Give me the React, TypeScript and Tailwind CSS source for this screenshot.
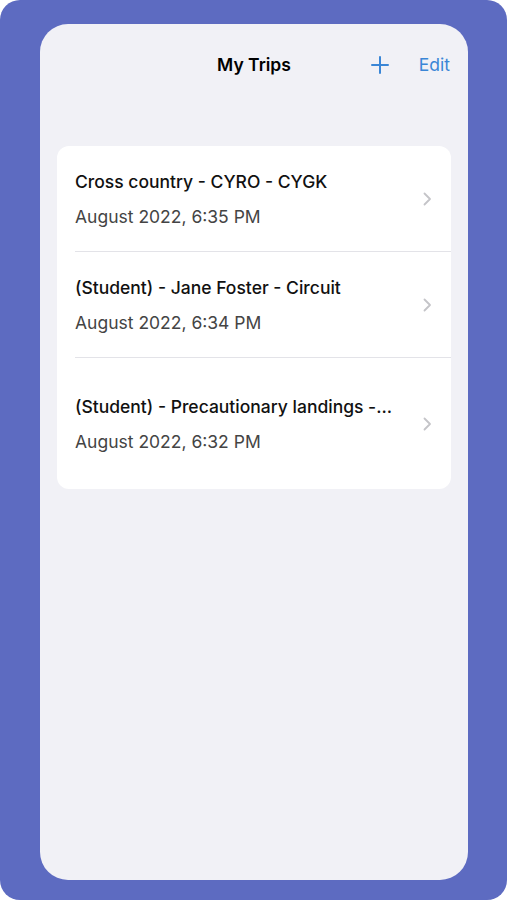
import React from "react";

function Chevron() {
  return (
    <svg width="9" height="14" viewBox="0 0 9 14" fill="none" className="shrink-0">
      <path d="M1.5 1.5L7 7L1.5 12.5" stroke="#c4c4c8" strokeWidth="1.8" strokeLinecap="round" strokeLinejoin="round" />
    </svg>
  );
}

const trips = [
  { title: "Cross country - CYRO - CYGK", date: "August 2022, 6:35 PM", h: "h-[106px]", pt: "pt-[25px]" },
  { title: "(Student) - Jane Foster - Circuit", date: "August 2022, 6:34 PM", h: "h-[106px]", pt: "pt-[25px]" },
  { title: "(Student) - Precautionary landings -...", date: "August 2022, 6:32 PM", h: "h-[131px]", pt: "pt-[38px]" },
];

export default function App() {
  return (
    <div className="w-[507px] h-[900px] bg-white" style={{ fontFamily: "Inter, 'Noto Sans', sans-serif" }}>
      <div className="w-[507px] h-[900px] bg-[#5d6bc1] rounded-[20px] pt-[24px] pl-[40px] pr-[39px] pb-[20px]">
        <div className="h-full bg-[#f1f1f6] rounded-[28px] flex flex-col">
          <div className="relative h-[42px] mt-[20px] flex items-center justify-center">
            <span className="text-[17.5px] font-semibold text-black">My Trips</span>
            <div className="absolute right-[18px] top-0 h-full flex items-center gap-[30px]">
              <svg width="18" height="18" viewBox="0 0 18 18" fill="none">
                <path d="M9 1V17M1 9H17" stroke="#3a86d6" strokeWidth="2" strokeLinecap="round" />
              </svg>
              <span className="text-[17.5px] text-[#3a86d6]">Edit</span>
            </div>
          </div>
          <div className="mt-[60px] mx-[17px] bg-white rounded-[12px] overflow-hidden">
            {trips.map((t, i) => (
              <div key={i} className={`${t.h} pl-[18px] relative`}>
                <div className={`h-full flex items-center pr-[19px] ${i < trips.length - 1 ? "border-b border-[#e3e3e8]" : ""}`}>
                  <div className={`flex-1 self-start ${t.pt} flex flex-col gap-[13px]`}>
                    <div className="text-[17.5px] leading-[22px] font-medium text-[#111]">{t.title}</div>
                    <div className="text-[17.5px] leading-[22px] text-[#444]">{t.date}</div>
                  </div>
                  <Chevron />
                </div>
              </div>
            ))}
          </div>
        </div>
      </div>
    </div>
  );
}
